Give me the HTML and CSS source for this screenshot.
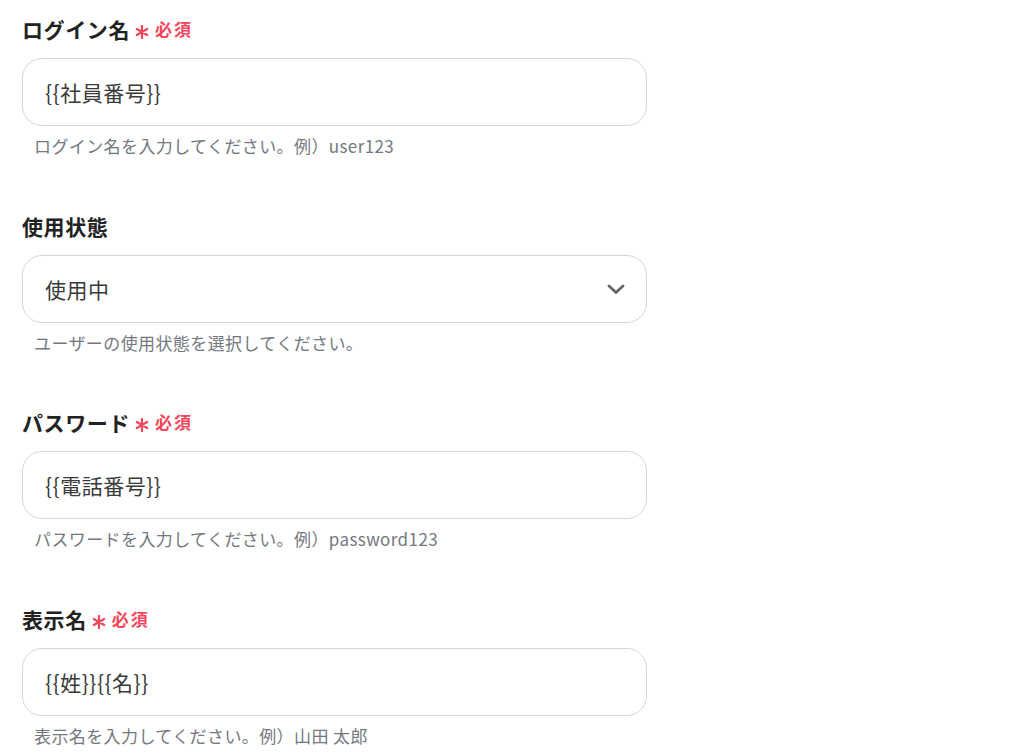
FILE: index.html
```html
<!DOCTYPE html>
<html lang="ja">
<head>
<meta charset="utf-8">
<link rel="stylesheet" href="styles.css">
</head>
<body>
<div class="form">
  <div class="field">
    <div class="label">ログイン名<svg class="ast" width="14" height="14" viewBox="0 0 14 14"><path d="M7 1 V13 M1.8 4 L12.2 10 M1.8 10 L12.2 4" stroke="#f4475c" stroke-width="2.2" stroke-linecap="round"/></svg><span class="req">必須</span></div>
    <div class="input">{{社員番号}}</div>
    <div class="help">ログイン名を入力してください。例）user123</div>
  </div>
  <div class="field">
    <div class="label">使用状態</div>
    <div class="input select">使用中
      <svg class="chev" width="18" height="10" viewBox="0 0 18 10"><path d="M2 2 L9 8.5 L16 2" fill="none" stroke="#666" stroke-width="2.8" stroke-linecap="round" stroke-linejoin="round"/></svg>
    </div>
    <div class="help">ユーザーの使用状態を選択してください。</div>
  </div>
  <div class="field">
    <div class="label">パスワード<svg class="ast" width="14" height="14" viewBox="0 0 14 14"><path d="M7 1 V13 M1.8 4 L12.2 10 M1.8 10 L12.2 4" stroke="#f4475c" stroke-width="2.2" stroke-linecap="round"/></svg><span class="req">必須</span></div>
    <div class="input">{{電話番号}}</div>
    <div class="help">パスワードを入力してください。例）password123</div>
  </div>
  <div class="field">
    <div class="label">表示名<svg class="ast" width="14" height="14" viewBox="0 0 14 14"><path d="M7 1 V13 M1.8 4 L12.2 10 M1.8 10 L12.2 4" stroke="#f4475c" stroke-width="2.2" stroke-linecap="round"/></svg><span class="req">必須</span></div>
    <div class="input">{{姓}}{{名}}</div>
    <div class="help">表示名を入力してください。例）山田 太郎</div>
  </div>
</div>
</body>
</html>
```
FILE: styles.css
```css
html, body {
  margin: 0;
  padding: 0;
  background: #fff;
  font-family: "Noto Sans CJK JP", "Noto Sans", sans-serif;
}
.form {
  padding: 13px 0 0 22px;
  width: 625px;
  display: flex;
  flex-direction: column;
  gap: 52.5px;
}
.field {
  display: flex;
  flex-direction: column;
}
.label {
  font-size: 21px;
  letter-spacing: 0.6px;
  font-weight: 700;
  color: #222;
  line-height: 32px;
  height: 32px;
  display: flex;
  align-items: center;
}
.ast {
  margin-left: 5px;
  position: relative;
  top: 3px;
}
.req {
  color: #f4475c;
  font-size: 17px;
  letter-spacing: 2px;
  font-weight: 700;
  margin-left: 6px;
}
.input {
  margin-top: 13px;
  height: 66px;
  border: 1px solid #d3d6dc;
  border-radius: 20px;
  box-sizing: content-box;
  display: flex;
  align-items: center;
  padding: 0 22px;
  font-size: 21px;
  letter-spacing: 0.5px;
  color: #3a3a3a;
}
.select {
  justify-content: space-between;
}
.chev {
  margin-right: -1px;
}
.help {
  margin-top: 9px;
  padding-left: 12px;
  font-size: 17px;
  letter-spacing: 0.4px;
  line-height: 22px;
  color: #737880;
}
```
